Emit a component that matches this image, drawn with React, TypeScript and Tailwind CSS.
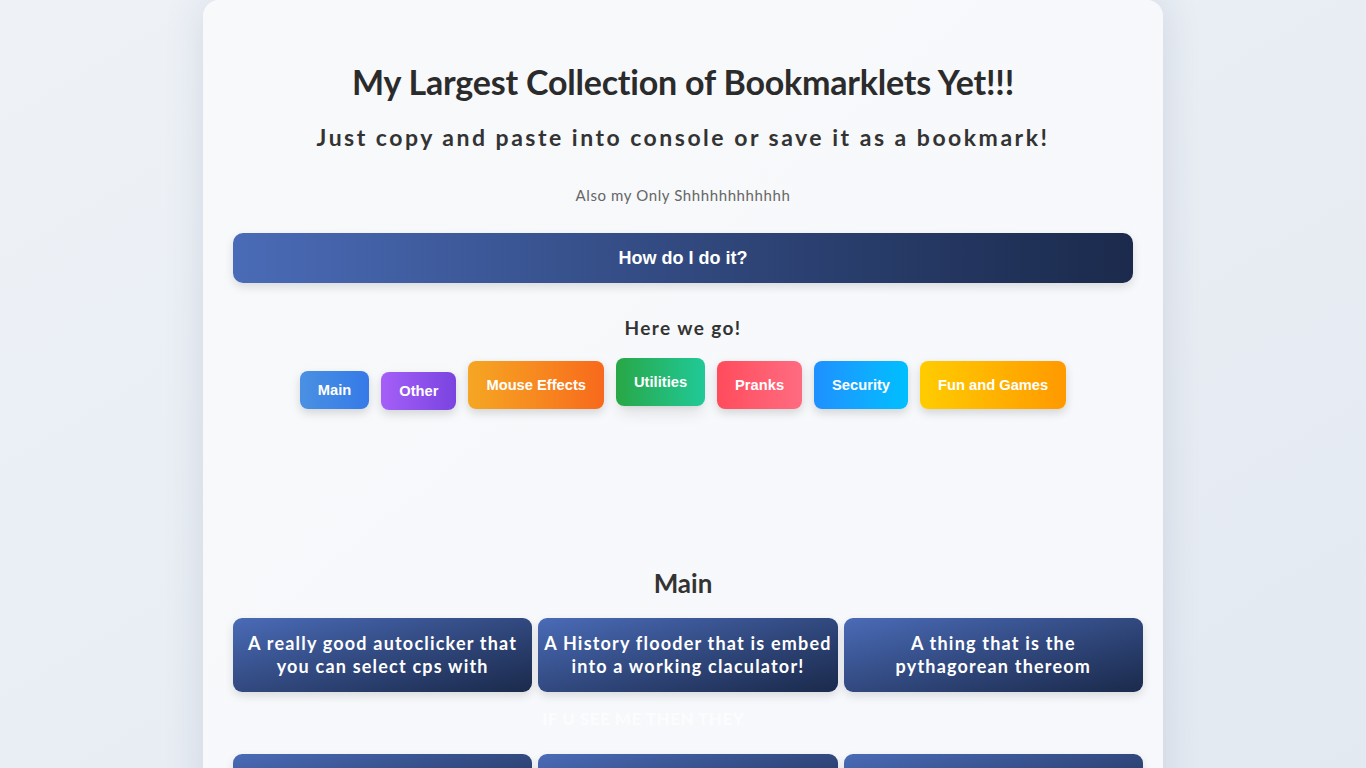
const tabs = [
  { label: 'Main', cls: 'px-[18px] py-[10px] bg-gradient-to-r from-[#4a90e2] to-[#357ae8]' },
  { label: 'Other', cls: 'px-[18px] py-[10px] mb-[-1px] bg-gradient-to-r from-[#a55ff8] to-[#7a43e0]' },
  { label: 'Mouse Effects', cls: 'px-[18px] py-[15px] bg-gradient-to-r from-[#f5a623] to-[#f7691c]' },
  { label: 'Utilities', cls: 'px-[18px] py-[15px] -translate-y-[3px] shadow-lg bg-gradient-to-r from-[#28a745] to-[#20c997]' },
  { label: 'Pranks', cls: 'px-[18px] py-[15px] bg-gradient-to-r from-[#ff4b5c] to-[#ff6b81]' },
  { label: 'Security', cls: 'px-[18px] py-[15px] bg-gradient-to-r from-[#1e90ff] to-[#00bfff]' },
  { label: 'Fun and Games', cls: 'px-[18px] py-[15px] bg-gradient-to-r from-[#ffcc00] to-[#ff9900]' },
];

const bookmarklets = [
  { text: 'A really good autoclicker that you can select cps with', pad: 'px-[5px]' },
  { text: 'A History flooder that is embed into a working claculator!', pad: 'px-[5px]' },
  { text: 'A thing that is the pythagorean thereom', pad: 'px-[20px]' },
  { text: '', pad: 'px-[5px]' },
  { text: '', pad: 'px-[5px]' },
  { text: '', pad: 'px-[5px]' },
];

export default function App() {
  return (
    <div className="min-h-screen bg-gradient-to-br from-[#eef2f7] to-[#e3e9f1] font-['Lato',sans-serif] text-[#333]">
      <div className="mx-auto w-[960px] min-h-screen rounded-t-2xl bg-gradient-to-br from-[#f8f9fb] to-[#f6f8fb] px-[30px] pt-[58px] shadow-[0_0_40px_rgba(30,50,90,0.12)]">
        <h1 className="text-center text-[34px] font-bold leading-[48px] text-[#2b2b2b] tracking-[-0.2px]">
          My Largest Collection of Bookmarklets Yet!!!
        </h1>
        <h2 className="mt-[11px] text-center text-[23px] font-bold leading-[40px] tracking-[2.5px] text-[#333]">
          Just copy and paste into console or save it as a bookmark!
        </h2>
        <p className="mt-[28px] text-center text-[15px] leading-[20px] tracking-[0.6px] text-[#666]">
          Also my Only Shhhhhhhhhhhh
        </p>

        <button className="mt-[28px] flex h-[50px] w-full items-center justify-center rounded-[10px] bg-gradient-to-r from-[#4a6bb7] to-[#1b2a4c] font-['Liberation_Sans',sans-serif] text-[18px] font-bold text-white shadow-[0_4px_10px_rgba(0,0,0,0.12)]">
          How do I do it?
        </button>

        <h3 className="mt-[33px] text-center text-[19px] font-bold leading-[24px] tracking-[1.4px] text-[#333]">
          Here we go!
        </h3>

        <div className="mt-[21px] flex items-end justify-center gap-[12px] font-['Liberation_Sans',sans-serif]">
          {tabs.map((t) => (
            <button
              key={t.label}
              className={`rounded-[8px] text-[14.7px] font-bold leading-[18px] text-white shadow-[0_4px_10px_rgba(0,0,0,0.15)] ${t.cls}`}
            >
              {t.label}
            </button>
          ))}
        </div>

        <h2 className="mt-[158px] text-center text-[26px] font-bold leading-[32px] text-[#333]">Main</h2>

        <div className="mt-[19px] mr-[-10px] grid grid-cols-3 gap-x-[6px] gap-y-[62px]">
          {bookmarklets.map((b, i) => (
            <div key={i} className="relative">
              <div
                className={`flex h-[74px] items-center justify-center rounded-[9px] bg-gradient-to-br from-[#4a6bb7] to-[#1b2a4c] text-center text-[18px] font-bold leading-[23px] tracking-[1.2px] text-white shadow-[0_4px_10px_rgba(0,0,0,0.12)] ${b.pad}`}
              >
                {b.text}
              </div>
              {i === 1 && (
                <div className="absolute left-[-45px] top-[88px] w-[300px] text-center text-[17px] font-black tracking-[0.5px] text-white/70">
                  IF U SEE ME THEN THEY
                </div>
              )}
            </div>
          ))}
        </div>
      </div>
    </div>
  );
}
